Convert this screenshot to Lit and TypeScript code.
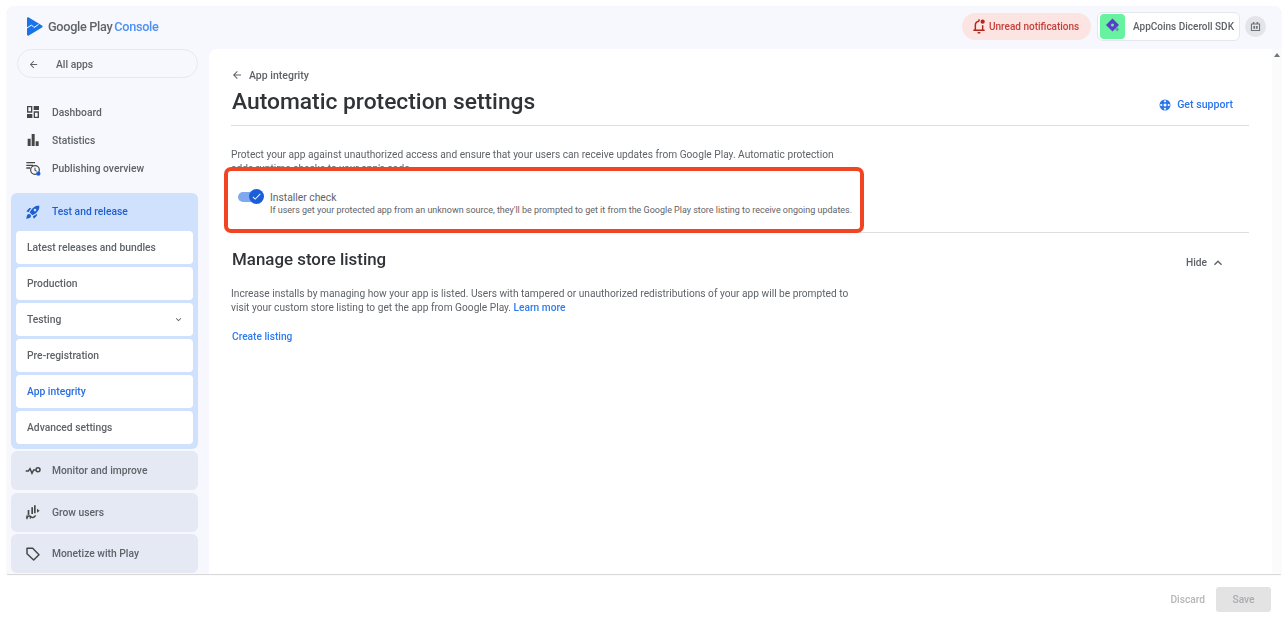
import { LitElement, css, html, svg } from "lit";
import { customElement } from "lit/decorators.js";

const icon = (body: unknown, size = 16) =>
  html`<svg width=${size} height=${size} viewBox="0 0 24 24" fill="currentColor">${body}</svg>`;

const icons = {
  back: svg`<path d="M20 11H7.83l5.59-5.59L12 4l-8 8 8 8 1.41-1.41L7.83 13H20v-2z"/>`,
  dashboard: svg`<path d="M3 3h8v10H3zm2 2v6h4V5zM13 3h8v6h-8zM3 15h8v6H3zM13 11h8v10h-8zm2 2v6h4v-6z" fill-rule="evenodd"/>`,
  stats: svg`<path d="M4 10h4.500v11H4zM10 3h4.500v18H10zM16 14h4.500v7H16z"/>`,
  publishing: svg`<path d="M2 3h13v2H2zM2 7h10v2H2zM2 11h6v2H2z"/><circle cx="15" cy="15" r="6.500" fill="none" stroke="currentColor" stroke-width="1.800"/><path d="M14.200 11.500h1.500v3.600l2.400 1.400-.8 1.200-3.100-1.900z"/><circle cx="20" cy="20.500" r="3.200" fill="#1a5fd8"/>`,
  rocket: svg`<path d="M9.19 6.35c-2.04 2.29-3.44 5.58-3.57 5.89L2 10.69l4.05-4.05c.47-.47 1.15-.68 1.81-.55l1.33.26zM11.17 17s3.74-1.55 5.89-3.7c5.4-5.4 4.5-9.62 4.21-10.57-.95-.3-5.17-1.19-10.57 4.21C8.55 9.09 7 12.83 7 12.83L11.17 17zm6.48-2.19c-2.29 2.04-5.58 3.44-5.89 3.57L13.31 22l4.05-4.05c.47-.47.68-1.15.55-1.81l-.26-1.33zM9 18c0 .83-.34 1.58-.88 2.12C6.94 21.3 2 22 2 22s.7-4.94 1.88-6.12C4.42 15.34 5.17 15 6 15c1.66 0 3 1.34 3 3zm4-9c0-1.1.9-2 2-2s2 .9 2 2-.9 2-2 2-2-.9-2-2z"/>`,
  monitor: svg`<path d="M1 12h4l2.500-3.500 3 7 2.500-5H16" fill="none" stroke="currentColor" stroke-width="2.200"/><circle cx="19.500" cy="10" r="3" fill="none" stroke="currentColor" stroke-width="2.200"/>`,
  grow: svg`<path d="M9.500 5h2.500v10H9.500zM13.500 2h2.500v12h-2.500zM18 7l4 3-4 3zM4 9h2.500v8H4z"/><path d="M2 21c3-3 5-4 7-2s4 2 7-2" fill="none" stroke="currentColor" stroke-width="2.200"/><path d="M3 17v6M8 18v4" stroke="currentColor" stroke-width="1.800"/>`,
  tag: svg`<path d="M3 3.500h8.500l9.500 9.500-8 8-10-9.500z" fill="none" stroke="currentColor" stroke-width="2.200" stroke-linejoin="round"/>`,
  chevronDown: svg`<path d="M7.41 8.59 12 13.17l4.59-4.58L18 10l-6 6-6-6z"/>`,
  chevronUp: svg`<path d="M12 8l-6 6 1.41 1.41L12 10.83l4.59 4.58L18 14z"/>`,
  bell: svg`<path d="M6.500 18v-7c0-3.300 2.300-5.700 5.500-6M17.500 11v7M3.500 18.500h17M10 22h4M12 2v3" fill="none" stroke="currentColor" stroke-width="2.200"/><circle cx="17.500" cy="5.500" r="3.200"/>`,
  robot: svg`<path d="M7 3.500h3v3h4v-3h3v3h3.500v14h-17v-14H7zM5.500 8.500v10h13v-10z"/><path d="M8 11h3.200v5H8zM12.800 11H16v5h-3.200z"/>`,
  support: svg`<circle cx="12" cy="12" r="11"/><circle cx="12" cy="12" r="3" fill="#fff"/><circle cx="12" cy="4.500" r="2.200" fill="#fff"/><circle cx="12" cy="19.500" r="2.200" fill="#fff"/><circle cx="4.500" cy="12" r="2.200" fill="#fff"/><circle cx="19.500" cy="12" r="2.200" fill="#fff"/>`,
  check: svg`<path d="M9 16.170 4.830 12 3.410 13.410 9 19 21 7 19.590 5.590z"/>`,
};

const topLinks = [
  { label: "Dashboard", icon: icons.dashboard },
  { label: "Statistics", icon: icons.stats },
  { label: "Publishing overview", icon: icons.publishing },
];

const releaseItems = [
  { label: "Latest releases and bundles" },
  { label: "Production" },
  { label: "Testing", more: true },
  { label: "Pre-registration" },
  { label: "App integrity", active: true },
  { label: "Advanced settings" },
];

const groups = [
  { label: "Monitor and improve", icon: icons.monitor },
  { label: "Grow users", icon: icons.grow },
  { label: "Monetize with Play", icon: icons.tag },
];

@customElement("app-root")
export class AppRoot extends LitElement {
  static styles = css`
    :host {
      display: block;
      height: 624px;
      overflow: hidden;
      background: #fff;
      font-family: Roboto, "Liberation Sans", sans-serif;
      color: #5f6368;
    }
    .page {
      display: flex;
      flex-direction: column;
      height: 624px;
      filter: blur(0.4px);
    }
    .shell {
      display: grid;
      grid-template-columns: 202px 1fr;
      grid-template-rows: 43px 1fr;
      height: 568px;
      margin: 6px 6px 0 7px;
      background: #f6f8fd;
      border-radius: 6px 6px 0 0;
      box-shadow: 0 1px 1px #d4d4d4;
      overflow: hidden;
    }

    /* top bar */
    .logo {
      display: flex;
      align-items: center;
      gap: 5px;
      padding: 0 0 2px 19px;
      font-size: 12.700px;
      font-weight: 500;
      letter-spacing: -0.3px;
    }
    .logo b {
      font-weight: 500;
      color: #5f6368;
    }
    .logo em {
      font-style: normal;
      color: #4f8ff0;
      margin-left: -1px;
    }
    .actions {
      display: flex;
      align-items: center;
      justify-content: flex-end;
      padding: 0 15px 3px 0;
    }
    .notif {
      display: flex;
      align-items: center;
      gap: 2px;
      height: 27px;
      width: 129px;
      box-sizing: border-box;
      padding-left: 9px;
      border-radius: 14px;
      background: #fbe4e2;
      color: #c5403a;
      font-size: 10px;
      font-weight: 500;
    }
    .notif svg {
      color: #b3261e;
    }
    .app {
      display: flex;
      align-items: center;
      gap: 8px;
      width: 143px;
      height: 29px;
      box-sizing: border-box;
      margin-left: 6px;
      padding-left: 2px;
      border: 1px solid #e4e7ee;
      border-radius: 6px;
      background: #fff;
      font-size: 10px;
      font-weight: 500;
      white-space: nowrap;
    }
    .app-icon {
      display: grid;
      place-items: center;
      width: 25px;
      height: 25px;
      border-radius: 4px;
      background: #66f29e;
    }
    .robot {
      display: grid;
      place-items: center;
      width: 21px;
      height: 21px;
      margin-left: 5px;
      border-radius: 50%;
      background: #e3e5e8;
      color: #70757a;
    }

    /* sidebar */
    nav {
      display: flex;
      flex-direction: column;
      padding: 0 11px 0 4px;
      font-size: 10.300px;
      font-weight: 500;
      min-height: 0;
      overflow: hidden;
    }
    nav > * {
      flex: none;
    }
    .all-apps {
      display: flex;
      align-items: center;
      gap: 17px;
      height: 29px;
      margin: 0 0 20px 6px;
      padding: 1px 0 0 10px;
      box-sizing: border-box;
      border: 1px solid #e3e8f2;
      border-radius: 15px;
    }
    .link {
      display: flex;
      align-items: center;
      gap: 11px;
      height: 28px;
      padding-left: 14px;
    }
    .link svg,
    .group svg {
      color: #444746;
    }
    .links {
      margin-bottom: 11px;
    }
    .release {
      display: flex;
      flex-direction: column;
      gap: 3px;
      margin-bottom: 2px;
      padding: 0 5px 5px;
      border-radius: 6px;
      background: #d0e1fd;
    }
    .release-head {
      display: flex;
      align-items: center;
      gap: 11px;
      height: 35px;
      padding: 2px 0 0 9px;
      color: #1f5fd0;
      box-sizing: border-box;
    }
    .sub {
      display: flex;
      align-items: center;
      justify-content: space-between;
      height: 33px;
      padding: 0 9px 0 11px;
      border-radius: 4px;
      background: #fff;
    }
    .sub.active {
      color: #2a6de0;
    }
    .group {
      display: flex;
      align-items: center;
      gap: 11px;
      height: 39px;
      margin-bottom: 2.500px;
      padding-left: 14px;
      border-radius: 6px;
      background: #e4e9f4;
    }

    /* main panel */
    .main-wrap {
      display: flex;
      min-height: 0;
    }
    main {
      flex: 1;
      box-sizing: border-box;
      padding: 19px 23px 0 22px;
      border-radius: 8px 0 0 0;
      background: #fff;
    }
    .scroll {
      width: 9px;
      background: #fbfbfc;
      display: flex;
      justify-content: center;
      padding-top: 4px;
      box-sizing: border-box;
    }
    .scroll i {
      width: 0;
      height: 0;
      border: 3px solid transparent;
      border-top: 0;
      border-bottom: 4px solid #70757a;
    }
    .crumb {
      display: flex;
      align-items: center;
      gap: 6px;
      height: 14px;
      font-size: 10.500px;
      font-weight: 500;
    }
    .title-row {
      display: flex;
      align-items: flex-end;
      justify-content: space-between;
      height: 44px;
      padding: 0 16px 10px 0;
      box-sizing: border-box;
      border-bottom: 1px solid #dcdee2;
      margin-bottom: 22px;
    }
    h1 {
      margin: 0 0 0 1px;
      color: #303337;
      font-size: 22.800px;
      font-weight: 500;
      line-height: 26px;
    }
    .support {
      display: flex;
      align-items: center;
      gap: 6px;
      margin-bottom: 4px;
      color: #2a76ea;
      font-size: 10.600px;
      font-weight: 500;
    }
    .copy {
      margin: 0;
      width: 625px;
      font-size: 10.180px;
      line-height: 14px;
      color: #5f6368;
    }
    .highlight {
      display: flex;
      align-items: flex-start;
      gap: 10px;
      position: relative;
      width: 640px;
      height: 66px;
      box-sizing: border-box;
      margin: -9px 0 0 -7px;
      padding: 20px 0 0 10px;
      border: 4px solid #f04423;
      border-radius: 7px;
      background: #fff;
    }
    .toggle {
      position: relative;
      flex: none;
      width: 22px;
      height: 10px;
      margin-top: 1px;
      border-radius: 6px;
      background: #7fa8f0;
    }
    .toggle span {
      position: absolute;
      top: -3px;
      right: -4px;
      display: grid;
      place-items: center;
      width: 15px;
      height: 15px;
      border-radius: 50%;
      background: #1a5fd8;
      color: #fff;
    }
    .check-label {
      font-size: 10.300px;
      line-height: 13px;
    }
    .check-help {
      font-size: 8.980px;
      line-height: 13px;
      white-space: nowrap;
    }
    .listing {
      border-top: 1px solid #dcdee2;
      margin-top: -1px;
      padding: 13px 16px 0 0;
    }
    .listing-head {
      display: flex;
      align-items: center;
      justify-content: space-between;
      height: 26px;
      margin-bottom: 15px;
    }
    h2 {
      margin: 0 0 0 1px;
      color: #303337;
      font-size: 16.900px;
      font-weight: 500;
    }
    .hide {
      display: flex;
      align-items: center;
      gap: 3px;
      margin: 7px 7px 0 0;
      font-size: 10.200px;
      font-weight: 500;
    }
    .copy a {
      color: #2f7cf0;
      font-weight: 500;
    }
    .create {
      margin: 16px 0 0 1px;
      color: #2f7cf0;
      font-size: 10.200px;
      font-weight: 500;
    }

    /* footer */
    footer {
      flex: 1;
      display: flex;
      align-items: center;
      justify-content: flex-end;
      gap: 11px;
      padding-right: 16px;
      font-size: 10.200px;
      font-weight: 500;
      color: #b4b6b9;
    }
    .save {
      display: grid;
      place-items: center;
      width: 55px;
      height: 25px;
      border-radius: 3px;
      background: #e3e3e3;
      color: #a9abae;
    }
  `;

  render() {
    return html`<div class="page">
      <div class="shell">
        <div class="logo">
          <svg width="17" height="19" viewBox="0 0 17 19">
            <path d="M1 1.500c0-1 1-1.500 1.800-1L16 8.500c.8.500.8 1.500 0 2L2.800 18.500c-.8.500-1.800 0-1.800-1z" fill="#1a73e8"/>
            <path d="M1 11l4.500-3 2.500 2.500 4.500-3" fill="none" stroke="#fff" stroke-width="1"/>
          </svg>
          <span><b>Google Play</b> <em>Console</em></span>
        </div>
        <div class="actions">
          <div class="notif">${icon(icons.bell, 16)}<span>Unread notifications</span></div>
          <div class="app">
            <span class="app-icon">
              <svg width="18" height="18" viewBox="0 0 18 18">
                <path d="M11 12l2.500-1.500 1.500 2-2 2z" fill="#6f8fb0"/>
                <path d="M8.500 1.500 15 8l-6.500 6.500L2 8z" fill="#5a3ec8"/>
                <circle cx="8.500" cy="8" r="1.500" fill="#66f29e"/>
              </svg>
            </span>
            <span>AppCoins Diceroll SDK</span>
          </div>
          <div class="robot">${icon(icons.robot, 13)}</div>
        </div>

        <nav>
          <div class="all-apps">${icon(icons.back, 11)}<span>All apps</span></div>
          <div class="links">
            ${topLinks.map((l) => html`<div class="link">${icon(l.icon)}<span>${l.label}</span></div>`)}
          </div>
          <div class="release">
            <div class="release-head">${icon(icons.rocket)}<span>Test and release</span></div>
            ${releaseItems.map(
              (item) => html`<div class="sub ${item.active ? "active" : ""}">
                <span>${item.label}</span>
                ${item.more ? icon(icons.chevronDown, 11) : ""}
              </div>`,
            )}
          </div>
          ${groups.map((g) => html`<div class="group">${icon(g.icon)}<span>${g.label}</span></div>`)}
        </nav>

        <div class="main-wrap">
          <main>
            <div class="crumb">${icon(icons.back, 12)}<span>App integrity</span></div>
            <div class="title-row">
              <h1>Automatic protection settings</h1>
              <div class="support">${icon(icons.support, 12)}<span>Get support</span></div>
            </div>
            <p class="copy">
              Protect your app against unauthorized access and ensure that your users can receive updates from Google
              Play. Automatic protection adds runtime checks to your app's code.
            </p>
            <div class="highlight">
              <div class="toggle"><span>${icon(icons.check, 11)}</span></div>
              <div>
                <div class="check-label">Installer check</div>
                <div class="check-help">
                  If users get your protected app from an unknown source, they'll be prompted to get it from the Google
                  Play store listing to receive ongoing updates.
                </div>
              </div>
            </div>
            <section class="listing">
              <div class="listing-head">
                <h2>Manage store listing</h2>
                <div class="hide"><span>Hide</span>${icon(icons.chevronUp, 16)}</div>
              </div>
              <p class="copy">
                Increase installs by managing how your app is listed. Users with tampered or unauthorized redistributions
                of your app will be prompted to visit your custom store listing to get the app from Google Play.
                <a>Learn more</a>
              </p>
              <div class="create">Create listing</div>
            </section>
          </main>
          <div class="scroll"><i></i></div>
        </div>
      </div>
      <footer>
        <span>Discard</span>
        <div class="save">Save</div>
      </footer>
    </div>`;
  }
}
